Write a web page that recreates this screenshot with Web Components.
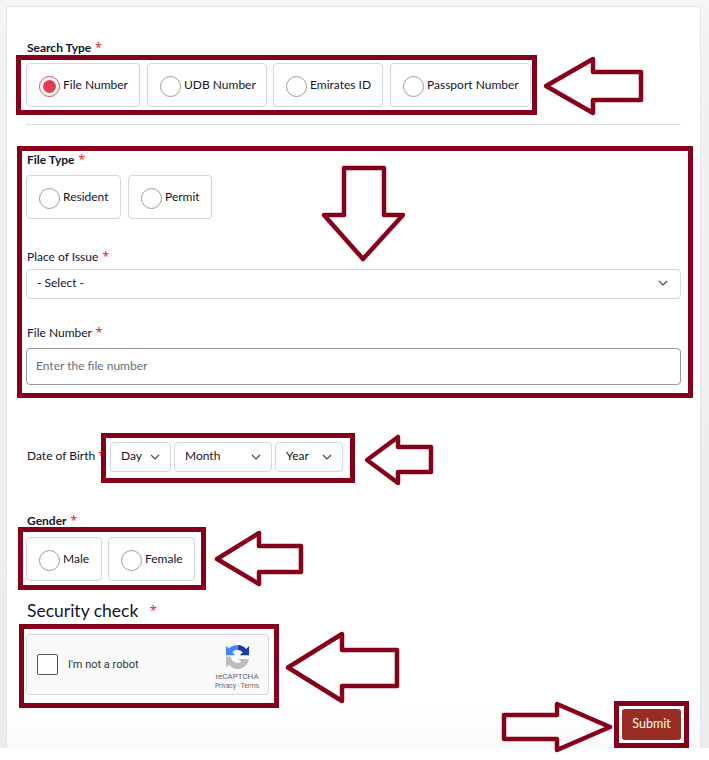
<!DOCTYPE html>
<html>
<head>
<meta charset="utf-8">
<title>Search</title>
<style>
  html, body { margin: 0; padding: 0; background: #fff; }
  body { font-family: "Lato", sans-serif; color: #1a1a2e; }
</style>
</head>
<body>
<search-page>
  <form-label strong req>Search Type</form-label>
  <radio-row>
    <radio-box w="114" checked>File Number</radio-box>
    <radio-box w="120">UDB Number</radio-box>
    <radio-box w="110" style="margin-left:-1px">Emirates ID</radio-box>
    <radio-box w="141">Passport Number</radio-box>
  </radio-row>
  <hr-line></hr-line>
  <form-label style="margin-top:27px" strong req>File Type</form-label>
  <radio-row>
    <radio-box w="95">Resident</radio-box>
    <radio-box w="84">Permit</radio-box>
  </radio-row>
  <form-label style="margin-top:30px" req>Place of Issue</form-label>
  <select-box>- Select -</select-box>
  <form-label style="margin-top:26px" req>File Number</form-label>
  <text-box placeholder="Enter the file number"></text-box>
  <dob-row></dob-row>
  <form-label style="margin-top:41px" strong req>Gender</form-label>
  <radio-row style="margin-top:8px">
    <radio-box w="76">Male</radio-box>
    <radio-box w="87" style="margin-left:-1px">Female</radio-box>
  </radio-row>
  <security-title>Security check</security-title>
  <robot-check></robot-check>
  <submit-bar>Submit</submit-bar>
  <mark-up slot="marks"></mark-up>
</search-page>

<script>
// page shell: grey surround, white card with a fade at the bottom
class SearchPage extends HTMLElement {
  constructor(){
    super();
    this.attachShadow({mode: 'open'});
    this.shadowRoot.innerHTML = `
      <style>
        :host { display: block; position: relative; width: 709px; height: 760px; overflow: hidden; background: #fff; }
        .bg { height: 748px; box-sizing: border-box; padding: 6px 8px 0 6px; background: linear-gradient(#f6f6f6, #f1f1f1 60px, #ececec); }
        .card { height: 742px; box-sizing: border-box; padding: 33px 19px 0 19px; background: linear-gradient(#fff 700px, #f9f9f9); border: 1px solid #e4e4e6; border-bottom: 0; border-radius: 3px 3px 0 0; }
      </style>
      <div class="bg"><div class="card"><slot></slot></div></div>
      <slot name="marks"></slot>
    `;
  }
}

class FormLabel extends HTMLElement {
  constructor(){
    super();
    this.attachShadow({mode: 'open'});
    const strong = this.hasAttribute('strong');
    this.shadowRoot.innerHTML = `
      <style>
        :host { display: block; padding-left: 1px; font-size: 12px; line-height: 16px; height: 16px; color: #14142b; }
        span { font-weight: ${strong ? 700 : 400}; }
        b { color: #f0202c; font: 400 12px/0 "Noto Sans", sans-serif; margin-left: 1px; }
      </style>
      <span><slot></slot></span> <b>*</b>
    `;
  }
}

class RadioRow extends HTMLElement {
  constructor(){
    super();
    this.attachShadow({mode: 'open'});
    this.shadowRoot.innerHTML = `
      <style>:host { display: flex; gap: 7px; margin-top: 7px; }</style>
      <slot></slot>
    `;
  }
}

class RadioBox extends HTMLElement {
  constructor(){
    super();
    this.attachShadow({mode: 'open'});
    const on = this.hasAttribute('checked');
    this.shadowRoot.innerHTML = `
      <style>
        :host { display: flex; align-items: center; box-sizing: border-box; width: ${this.getAttribute('w')}px; height: 44px; padding: 0 0 2px 12px; border: 1px solid #d5d7de; border-radius: 4px; background: #fff; font-size: 12px; color: #14142b; }
        .dot { flex: none; width: 21px; height: 21px; box-sizing: border-box; border-radius: 50%; border: 1px solid ${on ? '#e8425a' : '#9b9b9b'}; margin: 4px 3px 0 0; display: flex; align-items: center; justify-content: center; }
        .dot i { width: 13px; height: 13px; border-radius: 50%; background: #e23c52; display: ${on ? 'block' : 'none'}; }
      </style>
      <span class="dot"><i></i></span><slot></slot>
    `;
  }
}

class HrLine extends HTMLElement {
  constructor(){
    super();
    this.attachShadow({mode: 'open'});
    this.shadowRoot.innerHTML = `<style>:host { display: block; height: 1px; background: #dedfe3; margin-top: 17px; }</style>`;
  }
}

const chevron = `<svg width="10" height="6" viewBox="0 0 10 6"><path d="M1 1l4 4 4-4" fill="none" stroke="#444" stroke-width="1.1"/></svg>`;

class SelectBox extends HTMLElement {
  constructor(){
    super();
    this.attachShadow({mode: 'open'});
    this.shadowRoot.innerHTML = `
      <style>
        :host { display: flex; align-items: center; justify-content: space-between; box-sizing: border-box; height: 30px; margin-top: 4px; padding: 0 12px 2px 10px; border: 1px solid #d5d7de; border-radius: 4px; font-size: 12px; color: #14142b; }
        span { margin-bottom: 2px; }
      </style>
      <span><slot></slot></span>${chevron}
    `;
  }
}

class TextBox extends HTMLElement {
  constructor(){
    super();
    this.attachShadow({mode: 'open'});
    this.shadowRoot.innerHTML = `
      <style>
        :host { display: flex; align-items: center; box-sizing: border-box; height: 37px; margin-top: 7px; padding: 0 9px 2px; border: 1px solid #9a9a9a; border-radius: 4px; font-size: 12px; color: #66707a; }
      </style>
      ${this.getAttribute('placeholder')}
    `;
  }
}

class DobRow extends HTMLElement {
  constructor(){
    super();
    this.attachShadow({mode: 'open'});
    const sel = (w, t) => `<div class="sel" style="width:${w}px"><span>${t}</span>${chevron}</div>`;
    this.shadowRoot.innerHTML = `
      <style>
        :host { display: flex; align-items: center; margin-top: 57px; font-size: 12px; color: #14142b; }
        .lab { width: 83px; padding: 0 0 4px 1px; white-space: nowrap; }
        b { color: #f0202c; font: 400 12px/0 "Noto Sans", sans-serif; }
        .sel { display: flex; align-items: center; justify-content: space-between; box-sizing: border-box; height: 30px; margin-right: 3px; padding: 0 10px; border: 1px solid #d5d7de; border-radius: 4px; }
        .sel span { margin-bottom: 4px; }
      </style>
      <div class="lab">Date of Birth <b>*</b></div>
      ${sel(61, 'Day')}${sel(98, 'Month')}${sel(68, 'Year')}
    `;
  }
}

class SecurityTitle extends HTMLElement {
  constructor(){
    super();
    this.attachShadow({mode: 'open'});
    this.shadowRoot.innerHTML = `
      <style>
        :host { display: block; margin-top: 19px; height: 21px; padding-left: 1px; font-size: 17.5px; line-height: 22px; color: #14142b; }
        b { color: #f0202c; font: 400 13px/0 "Noto Sans", sans-serif; vertical-align: 2px; margin-left: 7px; }
      </style>
      <slot></slot> <b>*</b>
    `;
  }
}

class RobotCheck extends HTMLElement {
  constructor(){
    super();
    this.attachShadow({mode: 'open'});
    this.shadowRoot.innerHTML = `
      <style>
        :host { display: flex; align-items: center; box-sizing: border-box; width: 243px; height: 61px; margin-top: 13px; padding: 0 7px 0 10px; background: #f9f9f9; border: 1px solid #d8d8d8; border-radius: 3px; font-family: "Roboto", sans-serif; font-size: 11px; color: #333; }
        .box { flex: none; width: 21px; height: 21px; box-sizing: border-box; margin-right: 10px; background: #fff; border: 1px solid #555; border-radius: 2px; }
        .txt { flex: 1; }
        .logo { flex: none; width: 48px; padding-top: 6px; display: flex; flex-direction: column; align-items: center; color: #666; }
        .logo svg { display: block; margin-bottom: 3px; }
        .a { font-size: 8px; line-height: 10px; }
        .b { font-size: 6.5px; line-height: 9px; white-space: nowrap; }
      </style>
      <div class="box"></div>
      <div class="txt">I'm not a robot</div>
      <div class="logo">
        <svg width="25" height="25" viewBox="0 0 26 26">
          <path d="M13 1a12 12 0 0 1 9 4.2L25 2v9.6h-9.6l3-3A7 7 0 0 0 13 6z" fill="#1c3aa9"/>
          <path d="M1 1.8l3 3A12 12 0 0 1 13 1v5a7 7 0 0 0-5.3 2.5L10.6 11.6H1z" fill="#4285f4"/>
          <path d="M1 13h5a7 7 0 0 0 10.9 5.4l-2.7-2.7H25A12 12 0 0 1 4 21.6L1 24.5z" fill="#bdbdbd"/>
        </svg>
        <div class="a">reCAPTCHA</div>
        <div class="b">Privacy · Terms</div>
      </div>
    `;
  }
}

class SubmitBar extends HTMLElement {
  constructor(){
    super();
    this.attachShadow({mode: 'open'});
    this.shadowRoot.innerHTML = `
      <style>
        :host { display: flex; justify-content: flex-end; margin-top: 14px; }
        button { width: 59px; height: 31px; border: 0; border-radius: 3px; background: #9a2d22; color: #fff; font: 12.5px "Lato", sans-serif; padding: 0 0 2px; }
      </style>
      <button><slot></slot></button>
    `;
  }
}

// the dark red boxes and arrows somebody drew over the screenshot
class MarkUp extends HTMLElement {
  constructor(){
    super();
    this.attachShadow({mode: 'open'});
    const boxes = [[16,55,537,115],[17,146,693,398],[101,433,355,483],[18,527,206,590],[19,624,279,708],[614,701,689,748]];
    const arrows = [
      '546,86 593,59 593,72 641,72 641,100 593,100 593,113',
      '344,168 384,168 384,215 403,215 363,259 324,215 344,215',
      '367,460 398,437 398,447 431,447 431,472 398,472 398,483',
      '217,559 259,533 259,546 301,546 301,572 259,572 259,584',
      '288,667.5 342,634 342,650 397,650 397,686 342,686 342,701',
      '504,715 557,715 557,704 610,727 557,750 557,739 504,739'
    ];
    const c = '#85001a';
    const rects = boxes.map(([a,b,x,y]) => `<rect x="${a+2.5}" y="${b+2.5}" width="${x-a-5}" height="${y-b-5}"/>`).join('');
    const polys = arrows.map(p => `<polygon points="${p}" stroke-linejoin="round"/>`).join('');
    this.shadowRoot.innerHTML = `
      <style>
        :host { position: absolute; left: 0; top: 0; width: 709px; height: 760px; pointer-events: none; }
        svg { display: block; }
      </style>
      <svg width="709" height="760" viewBox="0 0 709 760" fill="none" stroke="${c}" stroke-width="5">
        ${rects}
        <g stroke-width="4.5">${polys}</g>
      </svg>
    `;
  }
}

customElements.define('search-page', SearchPage);
customElements.define('form-label', FormLabel);
customElements.define('radio-row', RadioRow);
customElements.define('radio-box', RadioBox);
customElements.define('hr-line', HrLine);
customElements.define('select-box', SelectBox);
customElements.define('text-box', TextBox);
customElements.define('dob-row', DobRow);
customElements.define('security-title', SecurityTitle);
customElements.define('robot-check', RobotCheck);
customElements.define('submit-bar', SubmitBar);
customElements.define('mark-up', MarkUp);
</script>
</body>
</html>
